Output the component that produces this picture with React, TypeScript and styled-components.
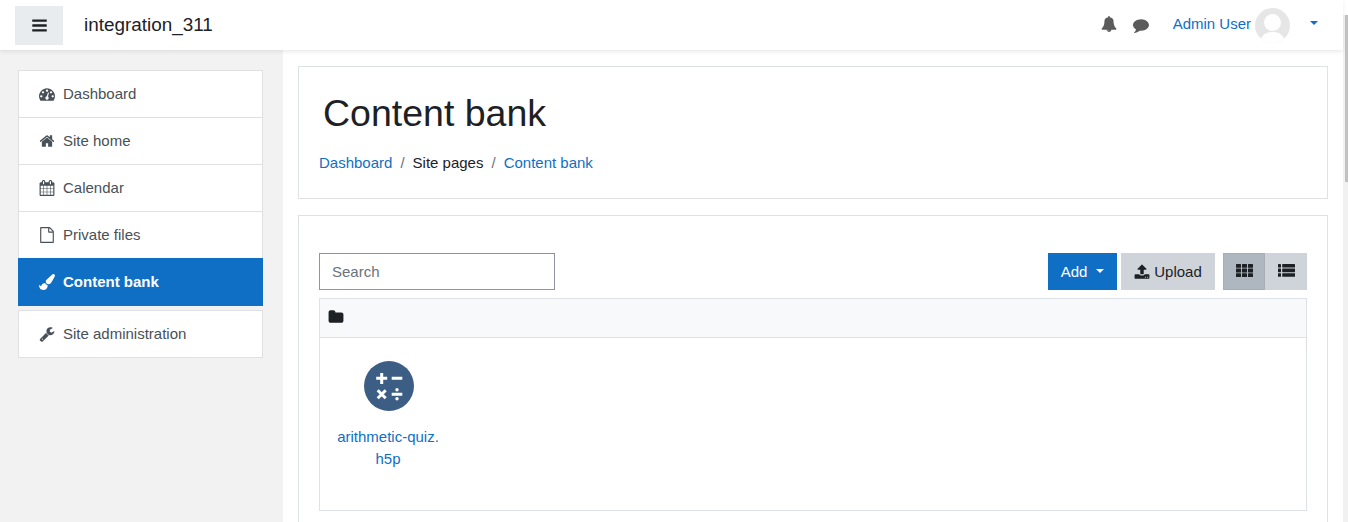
import React from 'react';
import styled, { createGlobalStyle } from 'styled-components';

const LINK = '#0f6fc5';

// Font Awesome 4 glyphs, the ones Moodle's Boost theme draws
const ICONS = {
  bars: 'M1664 1344v128q0 26-19 45t-45 19h-1408q-26 0-45-19t-19-45v-128q0-26 19-45t45-19h1408q26 0 45 19t19 45zm0-512v128q0 26-19 45t-45 19h-1408q-26 0-45-19t-19-45v-128q0-26 19-45t45-19h1408q26 0 45 19t19 45zm0-512v128q0 26-19 45t-45 19h-1408q-26 0-45-19t-19-45v-128q0-26 19-45t45-19h1408q26 0 45 19t19 45z',
  bell: 'M912 1696q0-16-16-16-59 0-101.500-42.500t-42.500-101.500q0-16-16-16t-16 16q0 73 51.500 124.500t124.500 51.500q16 0 16-16zm816-288q0 52-38 90t-90 38h-448q0 106-75 181t-181 75-181-75-75-181h-448q-52 0-90-38t-38-90q50-42 91-88t85-119.500 74.500-158.500 50-206 19.500-260q0-152 117-282.500t307-158.500q-8-19-8-39 0-40 28-68t68-28 68 28 28 68q0 20-8 39 190 28 307 158.500t117 282.500q0 139 19.500 260t50 206 74.500 158.500 85 119.500 91 88z',
  comment: 'M1792 896q0 174-120 321.500t-326 233-450 85.500q-70 0-145-8-198 175-460 242-49 14-114 22-17 2-30.500-9t-17.500-29v-1q-3-4-.5-12t2-10 4.500-9.500l6-9 7-8.500 8-9q7-8 31-34.500t34.500-38 31-39.500 32.500-51 27-59 26-76q-157-89-247.500-220t-90.500-281q0-130 71-248.500t191-204.500 286-136.500 348-50.500q244 0 450 85.500t326 233 120 321.500z',
  dashboard: 'M384 1152q0-53-37.500-90.500t-90.500-37.500-90.500 37.500-37.500 90.500 37.500 90.500 90.500 37.500 90.500-37.500 37.500-90.500zm192-448q0-53-37.500-90.500t-90.500-37.500-90.500 37.500-37.500 90.500 37.500 90.500 90.500 37.500 90.500-37.500 37.500-90.500zm428 481l101-382q6-26-7.500-48.500t-38.500-29.500-48 6.500-30 39.500l-101 382q-60 5-107 43.500t-63 98.500q-20 77 20 146t117 89 146-20 89-117q16-60-6-117t-72-91zm660-33q0-53-37.500-90.500t-90.500-37.500-90.500 37.500-37.500 90.500 37.500 90.500 90.500 37.500 90.500-37.500 37.500-90.500zm-640-640q0-53-37.500-90.500t-90.500-37.500-90.500 37.500-37.500 90.500 37.500 90.500 90.500 37.500 90.500-37.500 37.500-90.500zm448 192q0-53-37.500-90.500t-90.500-37.500-90.500 37.500-37.500 90.500 37.500 90.500 90.500 37.500 90.500-37.500 37.500-90.500zm320 448q0 261-141 483-19 29-54 29h-1402q-35 0-54-29-141-221-141-483 0-182 71-348t191-286 286-191 348-71 348 71 286 191 191 286 71 348z',
  home: 'M1472 992v480q0 26-19 45t-45 19h-384v-384h-256v384h-384q-26 0-45-19t-19-45v-480q0-1 .5-3t.5-3l575-474 575 474q1 2 1 6zm223-69l-62 74q-8 9-21 11h-3q-13 0-21-7l-692-577-692 577q-12 8-24 7-13-2-21-11l-62-74q-8-10-7-23.500t11-21.500l719-599q32-26 76-26t76 26l244 204v-195q0-14 9-23t23-9h192q14 0 23 9t9 23v408l219 182q10 8 11 21.500t-7 23.500z',
  calendar: 'M192 1664h288v-288h-288v288zm352 0h320v-288h-320v288zm-352-352h288v-320h-288v320zm352 0h320v-320h-320v320zm-352-384h288v-288h-288v288zm736 736h320v-288h-320v288zm-384-736h320v-288h-320v288zm768 736h288v-288h-288v288zm-384-352h320v-320h-320v320zm-352-864v-288q0-13-9.500-22.500t-22.500-9.500h-64q-13 0-22.500 9.500t-9.500 22.500v288q0 13 9.500 22.500t22.500 9.500h64q13 0 22.500-9.500t9.500-22.500zm736 864h288v-320h-288v320zm-384-384h320v-288h-320v288zm384 0h288v-288h-288v288zm32-480v-288q0-13-9.500-22.500t-22.500-9.500h-64q-13 0-22.500 9.500t-9.500 22.500v288q0 13 9.500 22.500t22.500 9.500h64q13 0 22.500-9.500t9.500-22.500zm384-64v1280q0 52-38 90t-90 38h-1408q-52 0-90-38t-38-90v-1280q0-52 38-90t90-38h128v-96q0-66 47-113t113-47h64q66 0 113 47t47 113v96h384v-96q0-66 47-113t113-47h64q66 0 113 47t47 113v96h128q52 0 90 38t38 90z',
  file: 'M1596 380q28 28 48 76t20 88v1152q0 40-28 68t-68 28h-1344q-40 0-68-28t-28-68v-1600q0-40 28-68t68-28h896q40 0 88 20t76 48zm-444-244v376h376q-10-29-22-41l-313-313q-12-12-41-22zm384 1528v-1024h-416q-40 0-68-28t-28-68v-416h-768v1536h1280z',
  brush: 'M1615 0q70 0 122.500 46.500t52.500 116.500q0 63-45 151-332 629-465 752-97 91-218 91-126 0-216.500-92.500t-90.500-219.500q0-128 92-212l638-579q59-54 130-54zm-909 1034q39 76 106.500 130t150.500 76l1 71q4 213-129.500 347t-348.500 134q-123 0-218-46.500t-152.500-127.500-86.500-183-29-220q7 5 41 30t62 44.500 59 36.500 46 17q41 0 55-37 25-66 57.500-112.500t69.500-76 88-47.500 103-25.500 125-10.500z',
  wrench: 'M448 1472q0-26-19-45t-45-19-45 19-19 45 19 45 45 19 45-19 19-45zm644-420l-682 682q-37 37-90 37-52 0-91-37l-106-108q-38-36-38-90 0-53 38-91l681-681q39 98 114.500 173.500t173.500 114.500zm634-435q0 39-23 106-47 134-164.500 217.500t-258.500 83.500q-185 0-316.500-131.500t-131.500-316.500 131.500-316.500 316.500-131.500q58 0 121.500 16.500t107.500 46.500q16 11 16 28t-16 28l-293 169v224l193 107q5-3 79-48.500t135.500-81 70.500-35.500q15 0 23.500 10t8.500 25z',
  upload: 'M1344 1472q0-26-19-45t-45-19-45 19-19 45 19 45 45 19 45-19 19-45zm256 0q0-26-19-45t-45-19-45 19-19 45 19 45 45 19 45-19 19-45zm128-224v320q0 40-28 68t-68 28h-1472q-40 0-68-28t-28-68v-320q0-40 28-68t68-28h427q21 56 70.500 92t110.500 36h256q61 0 110.500-36t70.500-92h427q40 0 68 28t28 68zm-325-648q-17 40-59 40h-256v448q0 26-19 45t-45 19h-256q-26 0-45-19t-19-45v-448h-256q-42 0-59-40-17-39 14-69l448-448q18-19 45-19t45 19l448 448q31 30 14 69z',
  folder: 'M1728 608v704q0 92-66 158t-158 66h-1216q-92 0-158-66t-66-158v-960q0-92 66-158t158-66h320q92 0 158 66t66 158v32h672q92 0 158 66t66 158z',
};

const GlobalStyle = createGlobalStyle`
  html, body {
    margin: 0;
    height: 522px;
    overflow: hidden;
    background: #fff;
  }
  * { box-sizing: border-box; }
  body {
    font-family: "Liberation Sans", Arial, sans-serif;
    font-size: 15px;
    line-height: 22.5px;
    color: #1d2125;
  }
`;

const GlyphSvg = styled.svg<{ $size: number }>`
  width: ${(p) => p.$size}px;
  height: ${(p) => p.$size}px;
  display: block;
  flex: none;
  fill: currentColor;
`;

const Glyph = ({ name, size = 16 }: { name: keyof typeof ICONS; size?: number }) => (
  <GlyphSvg $size={size} viewBox="0 0 1792 1792">
    <path d={ICONS[name]} />
  </GlyphSvg>
);

const Shell = styled.div`
  display: flex;
  height: 522px;
  overflow: hidden;
`;

const Stage = styled.div`
  flex: 1;
  min-width: 0;
  display: flex;
  flex-direction: column;
`;

const ScrollRail = styled.div`
  width: 5px;
  flex: none;
  background: #f1f1f1;
  display: flex;
  flex-direction: column;
  align-items: flex-end;
`;

const ScrollCap = styled.div`
  width: 5px;
  height: 15px;
  background: #fff;
`;

const ScrollThumb = styled.div`
  width: 3px;
  height: 167px;
  background: #c1c1c1;
`;

const Navbar = styled.header`
  height: 50px;
  flex: none;
  display: flex;
  align-items: center;
  padding: 0 0 0 15px;
  background: #fff;
  box-shadow: 0 2px 4px rgba(0, 0, 0, 0.08);
  position: relative;
  z-index: 1;
`;

const MenuButton = styled.button`
  width: 48px;
  height: 39px;
  margin-top: 1px;
  border: 0;
  padding: 0 0 1px 0;
  display: flex;
  align-items: center;
  justify-content: center;
  background: #e9ecef;
  color: #1d2125;
`;

const SiteName = styled.span`
  margin-left: 21px;
  font-size: 18.9px;
  color: #1d2125;
`;

const NavRight = styled.div`
  margin-left: auto;
  display: flex;
  align-items: center;
  padding-right: 25px;
`;

const NavIcon = styled.span<{ $gap: number; $lift?: number }>`
  display: flex;
  margin-right: ${(p) => p.$gap}px;
  margin-bottom: ${(p) => p.$lift ?? 0}px;
  color: #5b5b5b;
`;

const UserName = styled.a`
  color: ${LINK};
  font-size: 15px;
  margin-right: 4px;
  margin-top: -2px;
`;

const Avatar = styled.svg`
  width: 35px;
  height: 35px;
  display: block;
  border-radius: 50%;
`;

const Caret = styled.span<{ $color: string }>`
  display: inline-block;
  width: 0;
  height: 0;
  border-top: 4px solid ${(p) => p.$color};
  border-left: 4px solid transparent;
  border-right: 4px solid transparent;
`;

const UserCaret = styled(Caret)`
  margin-left: 20px;
  margin-top: -4px;
`;

const AddCaret = styled(Caret)`
  margin-top: -2px;
`;

const Body = styled.div`
  flex: 1;
  min-height: 0;
  display: flex;
`;

const Sidebar = styled.aside`
  width: 283px;
  flex: none;
  background: #f2f2f2;
  padding: 20px 20px 0 18px;
`;

const NavGroup = styled.nav`
  margin-bottom: 4px;
`;

const NavItem = styled.a<{ $active?: boolean }>`
  display: flex;
  align-items: center;
  height: ${(p) => (p.$active ? 48 : 47)}px;
  padding: 0 20px;
  margin-top: ${(p) => (p.$active ? -1 : 0)}px;
  position: relative;
  background: ${(p) => (p.$active ? LINK : '#fff')};
  border: 1px solid ${(p) => (p.$active ? LINK : '#dee0e2')};
  border-top-width: ${(p) => (p.$active ? 1 : 0)}px;
  color: ${(p) => (p.$active ? '#fff' : '#495057')};
  font-weight: ${(p) => (p.$active ? 700 : 400)};

  &:first-child {
    height: 48px;
    border-top-width: 1px;
  }
`;

const NavItemIcon = styled.span`
  width: 24px;
  flex: none;
  display: flex;
  align-items: center;
`;

const Main = styled.main`
  flex: 1;
  min-width: 0;
  background: #fff;
  padding: 16px 15px 0;
  display: flex;
  flex-direction: column;
  gap: 16px;
`;

const Card = styled.section`
  border: 1px solid #dee2e6;
  background: #fff;
`;

const PageHeader = styled(Card)`
  height: 133px;
  padding: 20px;
`;

const Title = styled.h1`
  margin: 0 0 0 4px;
  font-size: 37.5px;
  line-height: 52px;
  font-weight: 400;
  color: #1d2125;
`;

const Breadcrumb = styled.ol`
  list-style: none;
  margin: 13px 0 0;
  padding: 0;
  display: flex;
`;

const Crumb = styled.li`
  display: flex;

  & + &::before {
    content: '/';
    padding: 0 8px;
    color: #6a737b;
  }
`;

const Link = styled.a`
  color: ${LINK};
`;

const ContentCard = styled(Card)`
  flex: 1;
  border-bottom: 0;
  padding: 37px 20px 0;
`;

const Toolbar = styled.div`
  display: flex;
  align-items: stretch;
  height: 37px;
  margin-bottom: 8px;
`;

const SearchInput = styled.input`
  width: 236px;
  border: 1px solid #8f959e;
  padding: 1px 12px 0;
  font: inherit;
  color: #495057;
  background: #fff;

  &::placeholder {
    color: #6a737b;
    opacity: 1;
  }
`;

const Actions = styled.div`
  margin-left: auto;
  display: flex;
`;

const Button = styled.button<{ $primary?: boolean }>`
  border: 0;
  font: inherit;
  display: flex;
  align-items: center;
  justify-content: center;
  gap: 5px;
  padding: 1px 0 0;
  background: ${(p) => (p.$primary ? LINK : '#ced4da')};
  color: ${(p) => (p.$primary ? '#fff' : '#1d2125')};
`;

const AddButton = styled(Button)`
  width: 69px;
  gap: 9px;
  margin-right: 4px;
`;

const UploadButton = styled(Button)`
  width: 94px;
  gap: 4px;
  margin-right: 8px;
`;

const ToggleButton = styled(Button)<{ $on?: boolean }>`
  width: 42px;
  padding: 0;
  background: ${(p) => (p.$on ? '#aeb7bf' : '#ced4da')};
  border: 1px solid ${(p) => (p.$on ? '#a6afb8' : '#ced4da')};
`;

const ToggleIcon = styled.svg`
  width: 17px;
  height: 13px;
  display: block;
  margin-bottom: 2px;
  fill: currentColor;
`;

const FilePanel = styled.div`
  border: 1px solid #dee2e6;
  height: 213px;
  display: flex;
  flex-direction: column;
`;

const PathBar = styled.div`
  height: 39px;
  flex: none;
  display: flex;
  align-items: center;
  padding: 0 0 2px 8px;
  background: #f8f9fa;
  border-bottom: 1px solid #dee2e6;
  color: #1d2125;
`;

const FileGrid = styled.div`
  padding: 23px 17px;
  display: flex;
`;

const FileTile = styled.a`
  width: 102px;
  color: ${LINK};
  text-align: center;
  display: flex;
  flex-direction: column;
  align-items: center;
`;

const FileIcon = styled.svg`
  width: 50px;
  height: 50px;
  display: block;
  margin-left: 2px;
  margin-bottom: 15px;
`;

const FileName = styled.span`
  line-height: 22px;
`;

const navTop: { label: string; icon: keyof typeof ICONS; active?: boolean }[] = [
  { label: 'Dashboard', icon: 'dashboard' },
  { label: 'Site home', icon: 'home' },
  { label: 'Calendar', icon: 'calendar' },
  { label: 'Private files', icon: 'file' },
  { label: 'Content bank', icon: 'brush', active: true },
];

const gridCells = [0, 6, 12].flatMap((x) => [0, 4.6, 9.2].map((y) => ({ x, y })));

const App = () => (
  <>
    <GlobalStyle />
    <Shell>
      <Stage>
        <Navbar>
          <MenuButton>
            <Glyph name="bars" size={17} />
          </MenuButton>
          <SiteName>integration_311</SiteName>
          <NavRight>
            <NavIcon $gap={16} $lift={2}>
              <Glyph name="bell" />
            </NavIcon>
            <NavIcon $gap={24}>
              <Glyph name="comment" />
            </NavIcon>
            <UserName>Admin User</UserName>
            <Avatar viewBox="0 0 35 35">
              <rect width="35" height="35" fill="#e6e6e6" />
              <circle cx="17.5" cy="14.5" r="8.5" fill="#fff" />
              <path d="M5 35c1-9 7-11 12.5-11S29 26 30 35z" fill="#fff" />
            </Avatar>
            <UserCaret $color={LINK} />
          </NavRight>
        </Navbar>
        <Body>
          <Sidebar>
            <NavGroup>
              {navTop.map((item) => (
                <NavItem key={item.label} $active={item.active}>
                  <NavItemIcon>
                    <Glyph name={item.icon} />
                  </NavItemIcon>
                  {item.label}
                </NavItem>
              ))}
            </NavGroup>
            <NavGroup>
              <NavItem>
                <NavItemIcon>
                  <Glyph name="wrench" />
                </NavItemIcon>
                Site administration
              </NavItem>
            </NavGroup>
          </Sidebar>
          <Main>
            <PageHeader>
              <Title>Content bank</Title>
              <Breadcrumb>
                <Crumb>
                  <Link>Dashboard</Link>
                </Crumb>
                <Crumb>Site pages</Crumb>
                <Crumb>
                  <Link>Content bank</Link>
                </Crumb>
              </Breadcrumb>
            </PageHeader>
            <ContentCard>
              <Toolbar>
                <SearchInput placeholder="Search" />
                <Actions>
                  <AddButton $primary>
                    Add
                    <AddCaret $color="#fff" />
                  </AddButton>
                  <UploadButton>
                    <Glyph name="upload" />
                    Upload
                  </UploadButton>
                  <ToggleButton $on>
                    <ToggleIcon viewBox="0 0 17 13">
                      {gridCells.map((c) => (
                        <rect key={`${c.x}-${c.y}`} x={c.x} y={c.y} width="5" height="3.8" rx=".5" />
                      ))}
                    </ToggleIcon>
                  </ToggleButton>
                  <ToggleButton>
                    <ToggleIcon viewBox="0 0 17 13">
                      {[0, 4.6, 9.2].map((y) => (
                        <React.Fragment key={y}>
                          <rect x="0" y={y} width="3" height="3.6" rx=".4" />
                          <rect x="4.200" y={y} width="12.800" height="3.6" rx=".4" />
                        </React.Fragment>
                      ))}
                    </ToggleIcon>
                  </ToggleButton>
                </Actions>
              </Toolbar>
              <FilePanel>
                <PathBar>
                  <Glyph name="folder" />
                </PathBar>
                <FileGrid>
                  <FileTile>
                    <FileIcon viewBox="0 0 50 50">
                      <circle cx="25" cy="25" r="25" fill="#3c5d84" />
                      <path
                        d="M17.700 12v11M12.200 17.300h11M27.700 17.300h10.600M13.700 29.300l8 8M21.700 29.300l-8 8M27.700 33.300h10.600"
                        stroke="#fff"
                        strokeWidth="3"
                        fill="none"
                      />
                      <circle cx="33" cy="28.800" r="1.700" fill="#fff" />
                      <circle cx="33" cy="37.800" r="1.700" fill="#fff" />
                    </FileIcon>
                    <FileName>arithmetic-quiz.</FileName>
                    <FileName>h5p</FileName>
                  </FileTile>
                </FileGrid>
              </FilePanel>
            </ContentCard>
          </Main>
        </Body>
      </Stage>
      <ScrollRail>
        <ScrollCap />
        <ScrollThumb />
      </ScrollRail>
    </Shell>
  </>
);

export default App;
